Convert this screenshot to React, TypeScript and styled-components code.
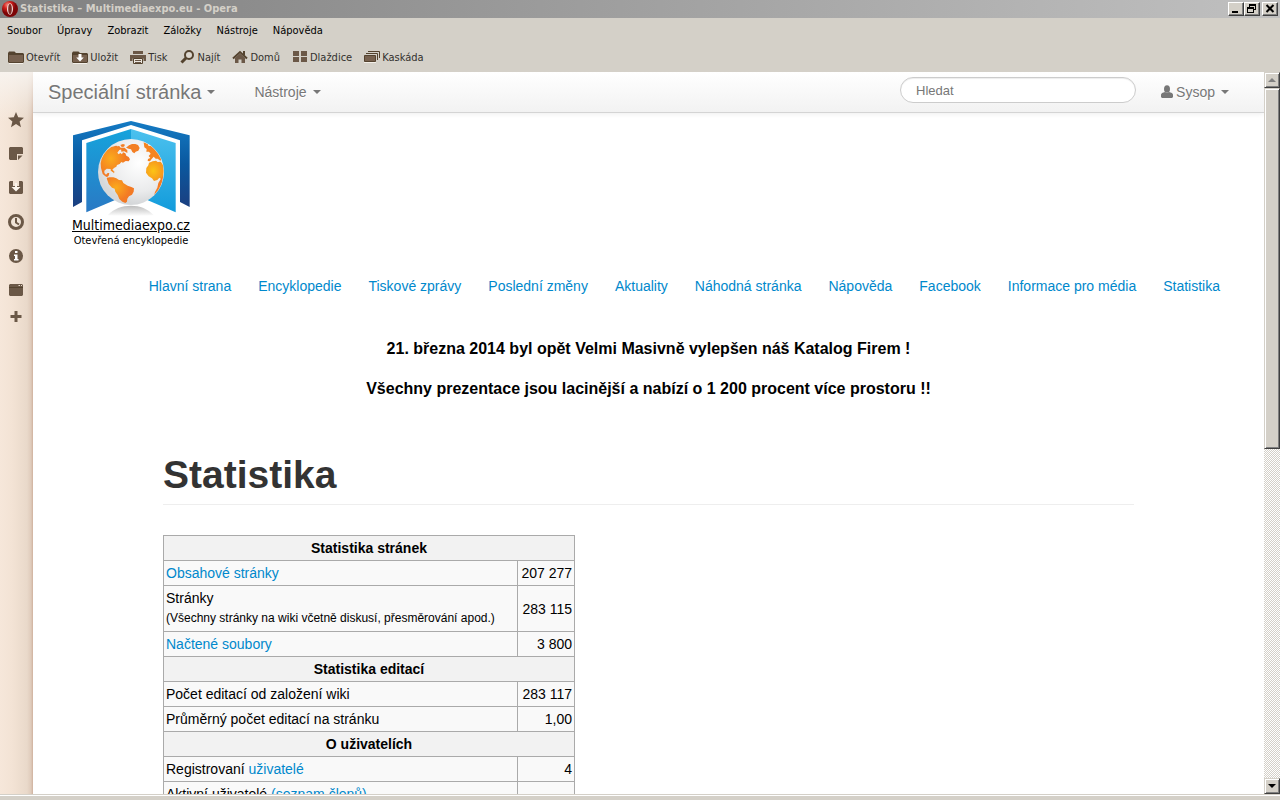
import React from "react";
import styled, { createGlobalStyle, css } from "styled-components";

const uiFont = '"DejaVu Sans Condensed", Tahoma, "DejaVu Sans", sans-serif';
const pageFont = '"Liberation Sans", Arial, Helvetica, sans-serif';
const face = "#d4d0c8";

const GlobalStyle = createGlobalStyle`
  *, *::before, *::after { box-sizing: border-box; }
  body { margin: 0; background: ${face}; }
  button, input { font: inherit; color: inherit; }
`;

const bevel = css`
  background: ${face};
  border: 1px solid;
  border-color: ${face} #404040 #404040 ${face};
  box-shadow: inset 1px 1px 0 #fff, inset -1px -1px 0 #808080;
`;

const Window = styled.div`
  display: flex;
  flex-direction: column;
  height: 100vh;
  overflow: hidden;
  font-family: ${uiFont};
  font-size: 11px;
  color: #000;
`;

const TitleBar = styled.header`
  display: flex;
  align-items: center;
  flex: none;
  height: 18px;
  padding: 0 2px;
  gap: 2px;
  background: linear-gradient(90deg, #808080, #c0c0c0);
`;

const Title = styled.span`
  flex: 1;
  font-family: Tahoma, "DejaVu Sans Condensed", sans-serif;
  font-weight: bold;
  line-height: 18px;
  color: ${face};
`;

const CaptionGroup = styled.div`
  display: flex;
`;

const CaptionButton = styled.button`
  display: flex;
  width: 16px;
  height: 14px;
  padding: 0;
  border: 1px solid;
  border-color: #fff #404040 #404040 #fff;
  box-shadow: inset -1px -1px 0 #808080;
  background: ${face};
`;

const MenuBar = styled.nav`
  display: flex;
  flex: none;
  gap: 15px;
  height: 25px;
  padding: 0 7px;
  background: ${face};
`;

const MenuButton = styled.button`
  padding: 0;
  border: 0;
  background: none;
  line-height: 24px;
`;

const ToolBar = styled.div`
  display: flex;
  flex: none;
  gap: 12px;
  height: 29px;
  padding: 0 8px;
  background: ${face};
`;

const ToolButton = styled.button`
  display: flex;
  align-items: center;
  gap: 2px;
  padding: 0;
  border: 0;
  background: none;
  color: #33302e;
  line-height: 29px;
`;

const Workspace = styled.div`
  display: flex;
  flex: 1;
  min-height: 0;
`;

const SidePanel = styled.nav`
  display: flex;
  flex-direction: column;
  align-items: stretch;
  flex: none;
  width: 33px;
  padding: 31px 1px 0 0;
  background:
    linear-gradient(180deg, rgba(248, 244, 240, 0.9), rgba(248, 244, 240, 0) 50px),
    linear-gradient(90deg, #f6e7da 0, #f3e3d5 12px, #e9d9ca 27px, #dfcbbb 31px, #cfb19e 33px);
`;

const PanelButton = styled.button<{ $short?: boolean }>`
  display: flex;
  align-items: center;
  justify-content: center;
  height: ${(p) => (p.$short ? 20 : 34)}px;
  padding: 0;
  border: 0;
  background: none;
`;

const Page = styled.main`
  display: flex;
  flex-direction: column;
  flex: 1;
  min-width: 0;
  overflow: hidden;
  background: #fff;
  font-family: ${pageFont};
  font-size: 14px;
  line-height: 20px;
`;

const NavBar = styled.div`
  display: flex;
  align-items: center;
  flex: none;
  height: 41px;
  padding: 0 35px 0 15px;
  border-bottom: 1px solid #d4d4d4;
  background: linear-gradient(180deg, #fff, #f2f2f2);
  box-shadow: 0 1px 5px rgba(0, 0, 0, 0.07);
  color: #777;
`;

const NavButton = styled.button<{ $brand?: boolean }>`
  display: flex;
  align-items: center;
  gap: 6px;
  margin-right: ${(p) => (p.$brand ? 39 : 0)}px;
  padding: 0;
  border: 0;
  background: none;
  font-size: ${(p) => (p.$brand ? 20 : 14)}px;
  line-height: 20px;
  text-shadow: 0 1px 0 #fff;
`;

const Caret = styled.span`
  border: 4px solid transparent;
  border-top-color: #777;
  border-bottom: 0;
`;

const UserLabel = styled.span`
  display: flex;
  align-items: center;
  gap: 3px;
`;

const SearchForm = styled.form`
  margin: 0 25px 4px auto;
`;

const SearchInput = styled.input`
  display: block;
  width: 236px;
  height: 26px;
  padding: 0 15px;
  border: 1px solid #ccc;
  border-radius: 13px;
  background: #fff;
  box-shadow: inset 0 1px 1px rgba(0, 0, 0, 0.075);
  font-size: 13px;
  &::placeholder { color: #777; opacity: 1; }
`;

const LogoLink = styled.a`
  display: flex;
  flex-direction: column;
  align-items: center;
  align-self: flex-start;
  margin: 8px 0 0 38px;
  color: #000;
  font-family: ${uiFont};
  text-decoration: none;
`;

const LogoName = styled.span`
  font-size: 14px;
  line-height: 18px;
  text-decoration: underline;
`;

const LogoTag = styled.span`
  font-size: 11px;
  line-height: 13px;
`;

const LinkRow = styled.nav`
  display: flex;
  justify-content: flex-end;
  gap: 27px;
  margin-top: 29px;
  padding-right: 44px;
  white-space: nowrap;
`;

const TextLink = styled.a`
  color: #0088cc;
  text-decoration: none;
`;

const Content = styled.article`
  padding: 43px 130px 0;
`;

const Notice = styled.p`
  margin: 0 0 20px;
  font-size: 16px;
  font-weight: bold;
  text-align: center;
`;

const Heading = styled.h1`
  margin: 56px 0 30px;
  padding-bottom: 9px;
  border-bottom: 1px solid #eee;
  color: #333;
  font-size: 39px;
  line-height: 40px;
`;

const StatsTable = styled.table`
  width: 412px;
  border-collapse: collapse;
  background: #f9f9f9;
  font-size: 14px;
  line-height: 20px;
  th, td { padding: 2px; border: 1px solid #aaa; }
  th { background: #f2f2f2; text-align: center; }
`;

const ValueColumn = styled.col`
  width: 57px;
`;

const ValueCell = styled.td`
  text-align: right;
  white-space: nowrap;
`;

const Note = styled.small`
  display: block;
  font-size: 12px;
  line-height: 21px;
`;

const ScrollBar = styled.div`
  display: flex;
  flex-direction: column;
  flex: none;
  width: 16px;
  background: repeating-conic-gradient(${face} 0 25%, #fff 0 50%) 0 0 / 2px 2px;
`;

const ScrollButton = styled.button`
  ${bevel}
  display: flex;
  align-items: center;
  justify-content: center;
  flex: none;
  height: 16px;
  padding: 0;
`;

const ScrollThumb = styled.div`
  ${bevel}
  flex: 360;
`;

const ScrollRest = styled.div`
  flex: 330;
`;

const BottomEdge = styled.footer`
  flex: none;
  height: 6px;
  border-top: 1px solid ${face};
  background: ${face};
  box-shadow: inset 0 1px 0 #fff;
`;

const ink = "#6b5847";
const inkDark = "#54432f";

type IconName =
  | "folder" | "save" | "print" | "find" | "home" | "tile" | "cascade"
  | "star" | "note" | "download" | "clock" | "info" | "window" | "plus";

const drawings: Record<IconName, React.ReactNode> = {
  folder: (
    <>
      <path d="M0 3 1 1.500h5.500L8 3h7l1 1v8l-1 1H1l-1-1z" fill={inkDark} />
      <path d="M1 5h14v7H1z" fill="#77614f" />
      <path d="M1 13.500h14" stroke="#f3efe9" />
    </>
  ),
  save: (
    <>
      <path d="M0 3 1 1.500h5.500L8 3h7l1 1v8l-1 1H1l-1-1z" fill={inkDark} />
      <path d="M1 5h14v7H1z" fill="#77614f" />
      <path d="M6.500 4h3v3.500h2.300L8 11.500 4.200 7.500h2.300z" fill="#fff" />
      <path d="M1 13.500h14" stroke="#f3efe9" />
    </>
  ),
  print: (
    <>
      <path d="M3 1h10v3H3zM0 5h16v6h-2.500V8.500h-11V11H0z" fill={ink} />
      <path d="M3.500 8.500h9v5h-9z" fill="#ece7df" stroke={inkDark} />
      <path d="M5 10.500h6M5 12.500h6" stroke={ink} />
    </>
  ),
  find: (
    <>
      <circle cx="9" cy="5" r="4" fill="#ddd8d0" stroke={inkDark} strokeWidth="2" />
      <path d="m6 8-4.500 4.500" stroke={inkDark} strokeWidth="3" />
    </>
  ),
  home: (
    <>
      <path d="M3 8 8 3.500 13 8v5H9.500V9.500h-3V13H3z" fill={ink} />
      <path d="m1 8.500 7-6.500 7 6.500" fill="none" stroke={inkDark} strokeWidth="2" />
      <path d="M12 1v4" stroke={inkDark} strokeWidth="2" />
    </>
  ),
  tile: <path d="M1 1h6v5H1zM9 1h6v5H9zM1 7h6v5H1zM9 7h6v5H9z" fill={ink} />,
  cascade: (
    <>
      <path d="M4 1.500h11.500V8M2 3.500h11.500V10" fill="none" stroke={inkDark} />
      <path d="M.5 5.500h11v6H.5z" fill="#77614f" stroke={inkDark} />
      <path d="M0 12.500h12" stroke="#f3efe9" />
    </>
  ),
  star: <path d="m8 0 2.200 5.300 5.800.4-4.400 3.700L13 15.200 8 12l-5 3.200 1.400-5.800L0 5.700l5.800-.4z" fill={ink} />,
  note: <path d="M2 1h12l1 1v6H9v6H2l-1-1V2zM10 9.500h4.500L10 14z" fill={ink} />,
  download: (
    <>
      <path d="M2 1h3v5h6V1h3l1 1v11l-1 1H2l-1-1V2z" fill={ink} />
      <path d="M7 3h2v4h3.500L8 11.500 3.500 7H7z" fill="#fbf4ec" />
    </>
  ),
  clock: (
    <>
      <circle cx="8" cy="8" r="6.500" fill="#f0e4d8" stroke={ink} strokeWidth="3" />
      <path d="M8 4v4.500l3 2" fill="none" stroke={ink} strokeWidth="2" />
    </>
  ),
  info: (
    <>
      <circle cx="8" cy="8" r="7" fill={ink} />
      <path d="M7 3h2.500v2H7zM6 6.500h3.500V11h1v1.500H6V11h1V8H6z" fill="#fff" />
    </>
  ),
  window: (
    <>
      <path d="M1 3l1-1h12l1 1v2H1zM1 6h14v7l-1 1H2l-1-1z" fill={ink} />
      <path d="M10.500 3.500H12M13 3.500h1" stroke="#eadccd" />
      <path d="M1 5.500h14" stroke={inkDark} />
    </>
  ),
  plus: <path d="M6.500 2h3v4h4v3h-4v4h-3V9h-4V6h4z" fill={ink} />,
};

const Icon = ({ name }: { name: IconName }) => (
  <svg width="16" height="16" viewBox="0 0 16 16" aria-hidden="true">{drawings[name]}</svg>
);

const OperaMark = () => (
  <svg width="16" height="16" viewBox="0 0 16 16" aria-hidden="true">
    <defs>
      <radialGradient id="opera" cx="35%" cy="25%">
        <stop offset="0" stopColor="#f58a80" />
        <stop offset=".5" stopColor="#cf1f1c" />
        <stop offset="1" stopColor="#7c0507" />
      </radialGradient>
    </defs>
    <circle cx="8" cy="8" r="8" fill="url(#opera)" />
    <ellipse cx="8" cy="8" rx="3" ry="5.800" fill="#f4dcd9" />
    <ellipse cx="8" cy="8" rx="1.800" ry="5" fill="#7e2a24" />
  </svg>
);

const BookGlobe = () => (
  <svg width="120" height="95" viewBox="213 63 360 285" aria-hidden="true">
    <defs>
      <linearGradient id="cover" x1="0" y1="0" x2="0" y2="1">
        <stop offset="0" stopColor="#147bc4" />
        <stop offset=".5" stopColor="#0a589f" />
        <stop offset="1" stopColor="#1b3f80" />
      </linearGradient>
      <linearGradient id="leftPage" x1="0" y1="0" x2="0" y2="1">
        <stop offset="0" stopColor="#16a3dc" />
        <stop offset="1" stopColor="#2a79c4" />
      </linearGradient>
      <linearGradient id="rightPage" x1="0" y1="0" x2="0" y2="1">
        <stop offset="0" stopColor="#4cc1ee" />
        <stop offset="1" stopColor="#129bdb" />
      </linearGradient>
      <radialGradient id="sea" cx="62%" cy="36%" r="62%">
        <stop offset="0" stopColor="#fff" />
        <stop offset=".7" stopColor="#eaebec" />
        <stop offset="1" stopColor="#d6d8da" />
      </radialGradient>
      <radialGradient id="west" cx="35%" cy="40%">
        <stop offset="0" stopColor="#fbab1c" />
        <stop offset="1" stopColor="#f37a24" />
      </radialGradient>
      <radialGradient id="east" cx="40%" cy="50%">
        <stop offset="0" stopColor="#fcc416" />
        <stop offset="1" stopColor="#f79a1e" />
      </radialGradient>
      <linearGradient id="shade" x1="0" y1="0" x2="0" y2="1">
        <stop offset="0" stopColor="#bcbcbc" />
        <stop offset="1" stopColor="#fff" />
      </linearGradient>
      <clipPath id="globeEdge"><circle cx="393" cy="216" r="98" /></clipPath>
    </defs>
    <path d="M219 106 393 63l176 43v215l-29-15V121L393 75l-147 46v185l-27 15z" fill="url(#cover)" />
    <path d="M259 129 393 87v190l-53 25-81 35z" fill="url(#leftPage)" />
    <path d="M393 87l134 42v208l-80-35-54-25z" fill="url(#rightPage)" />
    <path d="M323 346c18-20 43-29 70-29s50 9 68 29c-38 3-100 3-138 0z" fill="url(#shade)" />
    <circle cx="393" cy="216" r="99" fill="url(#sea)" />
    <g clipPath="url(#globeEdge)">
      <path d="M303 204L302 190 305 176 312 162 322 150 334 141 343 139 352 140 357 137 362 143 371 143 366 148 358 150 352 158 356 163 361 159 366 163 369 157 376 160 379 167 386 171 390 178 386 184 377 183 369 188 364 186 359 192 351 195 349 200 342 204 337 209 339 216 334 213 332 207 320 206 313 212 313 219 318 224 323 219 328 219 326 227 322 230 326 234 316 229 308 222z" fill="url(#west)" />
      <path d="M341 141l6-4 7 1-4 5zM361 135l8-3 6 2-3 6-7 1zM363 144l11-1 8 8 0 8-9-5-9 1z" fill="#f37f24" />
      <path d="M387 136l9-4 10 0 8 3 5 9-4 8-8 3-4 5-6-4-4-8-7-2-8-3z" fill="#f37f24" />
      <path d="M330 209l8 1 6 5-6 1zM338 217l6 0-3 3z" fill="#f58a22" />
      <path d="M320 235L328 232 340 232 349 235 357 240 366 241 370 249 383 257 394 261 402 265 401 275 396 284 387 289 382 296 381 305 376 309 367 305 358 297 353 285 346 275 344 266 336 263 326 252z" fill="url(#west)" />
      <path d="M431 127L443 132 446 138 455 137 467 148 477 162 486 178 481 182 473 176 467 176 461 170 455 177 450 184 443 183 444 177 451 174 446 168 452 161 447 155 439 155 440 147 433 142z" fill="#f58420" />
      <path d="M447 188L458 184 468 182 473 186 482 185 489 194 492 212 490 228 484 238 478 233 472 240 462 243 456 235 446 229 438 218 439 204 445 196z" fill="url(#east)" />
      <path d="M489 226L488 242 481 262 468 284 462 288 465 276 472 263 475 249z" fill="#f47c24" />
    </g>
  </svg>
);

const menus = ["Soubor", "Úpravy", "Zobrazit", "Záložky", "Nástroje", "Nápověda"];

const tools: [IconName, string][] = [
  ["folder", "Otevřít"], ["save", "Uložit"], ["print", "Tisk"], ["find", "Najít"],
  ["home", "Domů"], ["tile", "Dlaždice"], ["cascade", "Kaskáda"],
];

const panels: [IconName, string][] = [
  ["star", "Záložky"], ["note", "Poznámky"], ["download", "Stahování"], ["clock", "Historie"],
  ["info", "Informace"], ["window", "Okna"], ["plus", "Přidat panel"],
];

const siteLinks = [
  "Hlavní strana", "Encyklopedie", "Tiskové zprávy", "Poslední změny", "Aktuality",
  "Náhodná stránka", "Nápověda", "Facebook", "Informace pro média", "Statistika",
];

const GroupRow = ({ children }: { children: React.ReactNode }) => (
  <tr><th colSpan={2}>{children}</th></tr>
);

const StatRow = ({ value, children }: { value?: string; children: React.ReactNode }) => (
  <tr><td>{children}</td><ValueCell>{value}</ValueCell></tr>
);

export default function App() {
  return (
    <Window>
      <GlobalStyle />
      <TitleBar>
        <OperaMark />
        <Title>Statistika – Multimediaexpo.eu - Opera</Title>
        <CaptionGroup>
          <CaptionButton aria-label="Minimalizovat">
            <svg width="14" height="12" viewBox="0 0 14 12"><path d="M3 8h6v2H3z" /></svg>
          </CaptionButton>
          <CaptionButton aria-label="Obnovit">
            <svg width="14" height="12" viewBox="0 0 14 12" fill="none" stroke="#000" shapeRendering="crispEdges">
              <path d="M4.500 4V1.500h6v5H9M4 2h7M2.500 4.500h6v5h-6zM2 5h7" />
            </svg>
          </CaptionButton>
        </CaptionGroup>
        <CaptionButton aria-label="Zavřít">
          <svg width="14" height="12" viewBox="0 0 14 12"><path d="m3.500 2 7 7m0-7-7 7" stroke="#000" strokeWidth="2" /></svg>
        </CaptionButton>
      </TitleBar>
      <MenuBar>
        {menus.map((m) => <MenuButton key={m}>{m}</MenuButton>)}
      </MenuBar>
      <ToolBar>
        {tools.map(([icon, label]) => (
          <ToolButton key={label}><Icon name={icon} />{label}</ToolButton>
        ))}
      </ToolBar>
      <Workspace>
        <SidePanel>
          {panels.map(([icon, label]) => (
            <PanelButton key={label} aria-label={label} $short={icon === "plus"}><Icon name={icon} /></PanelButton>
          ))}
        </SidePanel>
        <Page>
          <NavBar>
            <NavButton $brand>Speciální stránka <Caret /></NavButton>
            <NavButton>Nástroje <Caret /></NavButton>
            <SearchForm>
              <SearchInput type="search" aria-label="Hledat" placeholder="Hledat" />
            </SearchForm>
            <NavButton>
              <UserLabel>
                <svg width="12" height="14" viewBox="0 0 12 14" fill="#777" aria-hidden="true">
                  <ellipse cx="6" cy="4" rx="3" ry="3.800" />
                  <path d="M0 12V9.500L1 8l3-1 2 1 2-1 3 1 1 1.500V12l-1 1H1z" />
                </svg>
                Sysop
              </UserLabel>
              <Caret />
            </NavButton>
          </NavBar>
          <LogoLink href="#">
            <BookGlobe />
            <LogoName>Multimediaexpo.cz</LogoName>
            <LogoTag>Otevřená encyklopedie</LogoTag>
          </LogoLink>
          <LinkRow>
            {siteLinks.map((l) => <TextLink key={l} href="#">{l}</TextLink>)}
          </LinkRow>
          <Content>
            <Notice>21. března 2014 byl opět Velmi Masivně vylepšen náš Katalog Firem !</Notice>
            <Notice>Všechny prezentace jsou lacinější a nabízí o 1 200 procent více prostoru !!</Notice>
            <Heading>Statistika</Heading>
            <StatsTable>
              <colgroup><col /><ValueColumn /></colgroup>
              <tbody>
                <GroupRow>Statistika stránek</GroupRow>
                <StatRow value="207 277"><TextLink href="#">Obsahové stránky</TextLink></StatRow>
                <StatRow value="283 115">
                  Stránky
                  <Note>(Všechny stránky na wiki včetně diskusí, přesměrování apod.)</Note>
                </StatRow>
                <StatRow value="3 800"><TextLink href="#">Načtené soubory</TextLink></StatRow>
                <GroupRow>Statistika editací</GroupRow>
                <StatRow value="283 117">Počet editací od založení wiki</StatRow>
                <StatRow value="1,00">Průměrný počet editací na stránku</StatRow>
                <GroupRow>O uživatelích</GroupRow>
                <StatRow value="4">Registrovaní <TextLink href="#">uživatelé</TextLink></StatRow>
                <StatRow>Aktivní uživatelé <TextLink href="#">(seznam členů)</TextLink></StatRow>
              </tbody>
            </StatsTable>
          </Content>
        </Page>
        <ScrollBar>
          <ScrollButton aria-label="Nahoru">
            <svg width="8" height="4" viewBox="0 0 8 4"><path d="M4 0l4 4H0z" fill="#808080" /></svg>
          </ScrollButton>
          <ScrollThumb />
          <ScrollRest />
          <ScrollButton aria-label="Dolů">
            <svg width="8" height="4" viewBox="0 0 8 4"><path d="M4 4 0 0h8z" /></svg>
          </ScrollButton>
        </ScrollBar>
      </Workspace>
      <BottomEdge />
    </Window>
  );
}
